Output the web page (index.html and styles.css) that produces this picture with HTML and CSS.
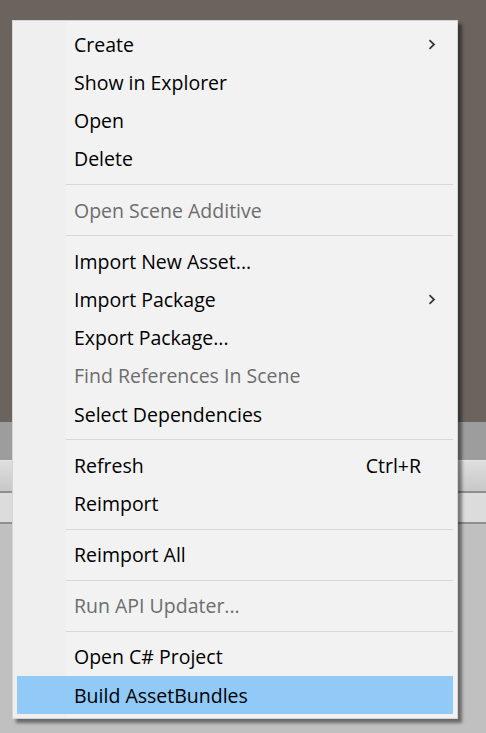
FILE: index.html
```html
<!DOCTYPE html>
<html>
<head>
<meta charset="utf-8">
<link rel="stylesheet" href="styles.css">
</head>
<body>
<div class="page">
  <div class="scene"></div>
  <div class="toolbar"></div>
  <div class="tabbar"></div>
  <div class="divider"></div>
  <div class="tabbar2"></div>
  <div class="divider"></div>
  <div class="panel"></div>
</div>

<div class="menu">
  <div class="item"><span class="label">Create</span><svg class="arrow" width="8" height="11" viewBox="0 0 8 11"><path d="M1.5 1.2 L6 5.5 L1.5 9.8" fill="none" stroke="#3a3a3a" stroke-width="1.8"/></svg></div>
  <div class="item"><span class="label">Show in Explorer</span></div>
  <div class="item"><span class="label">Open</span></div>
  <div class="item"><span class="label">Delete</span></div>
  <div class="sep"></div>
  <div class="item disabled"><span class="label">Open Scene Additive</span></div>
  <div class="sep"></div>
  <div class="item"><span class="label">Import New Asset...</span></div>
  <div class="item"><span class="label">Import Package</span><svg class="arrow" width="8" height="11" viewBox="0 0 8 11"><path d="M1.5 1.2 L6 5.5 L1.5 9.8" fill="none" stroke="#3a3a3a" stroke-width="1.8"/></svg></div>
  <div class="item"><span class="label">Export Package...</span></div>
  <div class="item disabled"><span class="label">Find References In Scene</span></div>
  <div class="item"><span class="label">Select Dependencies</span></div>
  <div class="sep"></div>
  <div class="item"><span class="label">Refresh</span><span class="shortcut">Ctrl+R</span></div>
  <div class="item"><span class="label">Reimport</span></div>
  <div class="sep"></div>
  <div class="item"><span class="label">Reimport All</span></div>
  <div class="sep"></div>
  <div class="item disabled"><span class="label">Run API Updater...</span></div>
  <div class="sep"></div>
  <div class="item"><span class="label">Open C# Project</span></div>
  <div class="item active"><span class="label">Build AssetBundles</span></div>
</div>
</body>
</html>
```

FILE: styles.css
```css
html, body {
  margin: 0;
  padding: 0;
  width: 486px;
  height: 733px;
  overflow: hidden;
  font-family: "Open Sans", "Noto Sans", sans-serif;
}

.page {
  display: flex;
  flex-direction: column;
  height: 733px;
  background: #c0c0c0;
}

.scene {
  height: 422px;
  background: #6b635d;
}

.toolbar {
  height: 38px;
  background: #9d9d9d;
  border-bottom: 1px solid #e6e6e6;
}

.tabbar {
  height: 30px;
  background: linear-gradient(#dedede, #c8c8c8);
}

.divider {
  height: 2px;
  background: #8f8f8f;
}

.tabbar2 {
  height: 29px;
  background: #dcdcdc;
}

.panel {
  flex: 1;
  background: #c0c0c0;
}

.menu {
  position: absolute;
  left: 12px;
  top: 20px;
  width: 436px;
  padding: 4px 4px 4px 4px;
  border: 1px solid #d4d4d4;
  background: linear-gradient(to right, #efefef 0, #efefef 53px, #f2f2f2 53px);
  box-shadow: 4px 4px 3px rgba(0, 0, 0, 0.45);
  display: flex;
  flex-direction: column;
}

.item {
  height: 38.25px;
  display: flex;
  align-items: center;
  padding-left: 57px;
  padding-right: 16px;
  font-size: 19.5px;
  color: #000;
  position: relative;
}

.item .label {
  flex: 1;
  white-space: nowrap;
}

.item.disabled {
  color: #6d6d6d;
}

.item.active {
  background: #91c9f7;
}

.shortcut {
  margin-right: 16px;
}

.arrow {
  margin-right: 1px;
}

.sep {
  height: 12.9px;
  display: flex;
  align-items: center;
  padding-left: 49px;
}

.sep::after {
  content: "";
  display: block;
  flex: 1;
  height: 1px;
  background: #d7d7d7;
}
```
